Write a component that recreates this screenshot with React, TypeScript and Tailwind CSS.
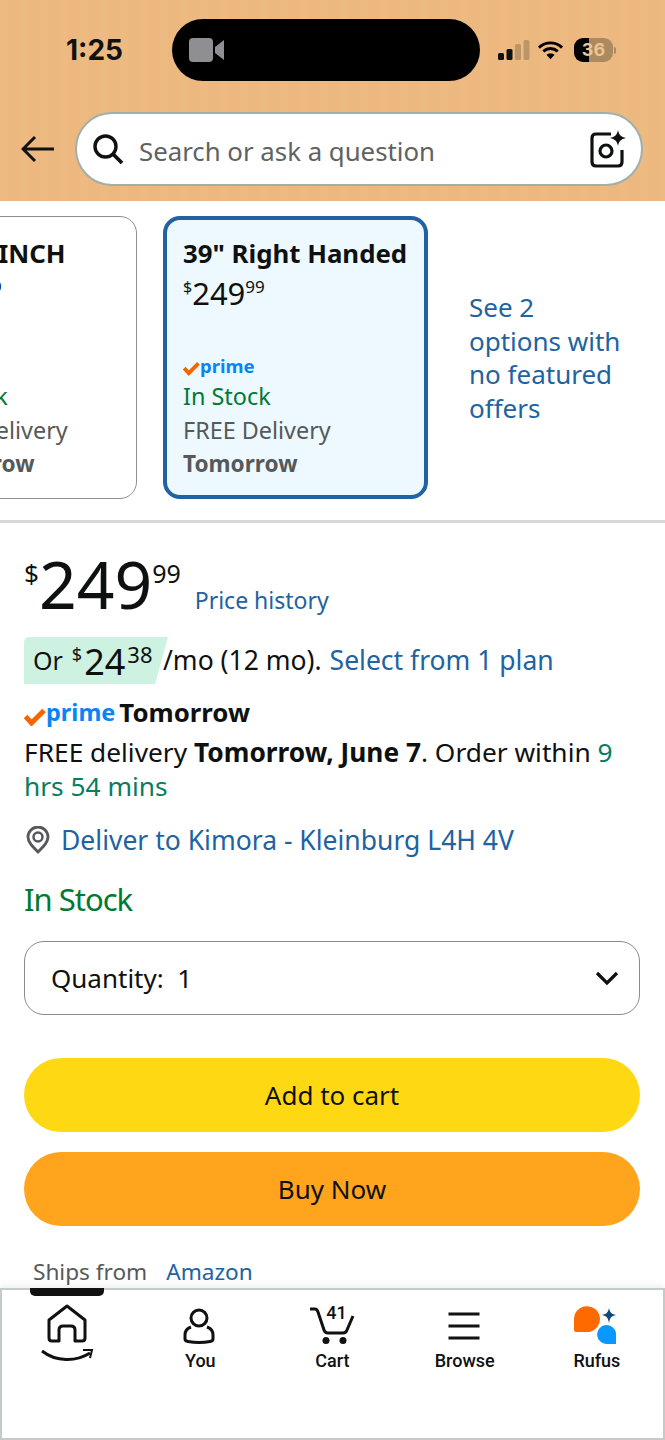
const font = { fontFamily: '"Noto Sans", sans-serif' };

function PrimeBadge({ size }: { size: 'sm' | 'lg' }) {
  const big = size === 'lg';
  return (
    <span className="inline-flex items-end">
      <svg viewBox="0 0 22 18" className={big ? 'mb-[0px] h-[18px] w-[22px]' : 'mb-[1px] h-[15px] w-[17px]'}>
        <path d="M1.5 8.5 L7.5 15 L20 2.5" fill="none" stroke="#f56600" strokeWidth="5" />
      </svg>
      <span className={big ? 'text-[23.500px] leading-[28px] font-bold text-[#0a84f5]' : 'text-[18.500px] leading-[22px] font-bold text-[#0a84f5]'}>
        prime
      </span>
    </span>
  );
}

function Price({ cents, dollars }: { dollars: string; cents: string }) {
  return (
    <div className="flex h-[34px] items-start text-[#0f1111]">
      <span className="mt-[2px] text-[16px] leading-[18px]">$</span>
      <span className="text-[31px] leading-[34px]">{dollars}</span>
      <span className="mt-[2px] text-[17px] leading-[18px]">{cents}</span>
    </div>
  );
}

function VariantCard({ selected, titleClass, title, dollars }: { selected?: boolean; titleClass?: string; title: string; dollars: string }) {
  return (
    <div
      className={
        selected
          ? 'h-[283px] w-[265px] shrink-0 rounded-[17px] border-4 border-[#2162a1] bg-[#edf8ff] pt-[16px] pl-[16px]'
          : 'ml-[-100px] h-[283px] w-[237px] shrink-0 rounded-[17px] border-[1.5px] border-[#8d9090] bg-white pt-[19px] pl-[19px]'
      }
    >
      <div className={`whitespace-nowrap text-[25.800px] leading-[34px] font-bold text-[#0f1111] ${titleClass ?? ''}`}>{title}</div>
      <div className="mt-[6px]">
        <Price dollars={dollars} cents="99" />
      </div>
      <div className="mt-[45px] flex h-[22px] items-end">
        <PrimeBadge size="sm" />
      </div>
      <div className="mt-[2px] text-[23.400px] leading-[34px] text-[#007a33]">In Stock</div>
      <div className="text-[23.400px] leading-[34px] text-[#565959]">FREE Delivery</div>
      <div className="text-[22.600px] leading-[34px] font-bold text-[#565959]">Tomorrow</div>
    </div>
  );
}

function StatusBar() {
  return (
    <div className="relative flex h-[62px] items-center">
      <div className="ml-[66px] w-[106px] text-[28px] font-bold text-[#111]" style={{ fontFamily: 'Inter' }}>
        1:25
      </div>
      <div className="flex h-[62px] w-[308px] items-center rounded-[31px] bg-black pl-[17px]">
        <svg viewBox="0 0 36 24" className="h-[24px] w-[36px]">
          <rect x="0" y="0" width="24" height="24" rx="4" fill="#8e8e93" />
          <path d="M26 9 L35 2 V22 L26 15 Z" fill="#8e8e93" />
        </svg>
      </div>
      <svg viewBox="0 0 32 20" className="ml-[18px] h-[20px] w-[32px]">
        <rect x="0" y="13" width="6" height="7" rx="1.5" fill="#111" />
        <rect x="8.500" y="9" width="6" height="11" rx="1.5" fill="#111" />
        <rect x="17" y="4" width="6" height="16" rx="1.500" fill="#bb9768" />
        <rect x="25.500" y="0" width="6" height="20" rx="1.500" fill="#bb9768" />
      </svg>
      <svg viewBox="0 0 28 20" className="ml-[7px] h-[20px] w-[27px]">
        <path d="M2 7.500 C9 1 19 1 26 7.500" fill="none" stroke="#000" strokeWidth="3" />
        <path d="M6.500 11.500 C11 7.500 17 7.500 21.500 11.500" fill="none" stroke="#000" strokeWidth="3" />
        <path d="M14 19.500 L9.800 15 C12 13 16 13 18.200 15 Z" fill="#000" />
      </svg>
      <div
        className="ml-[10px] flex h-[24px] w-[39px] items-center justify-center rounded-[9px] bg-[linear-gradient(90deg,#000_38%,#ab8a5f_38%)] text-[18px] leading-none font-bold text-[#ecc595]"
        style={{ fontFamily: 'Inter' }}
      >
        36
      </div>
      <div className="ml-[1px] h-[7px] w-[2px] rounded-r-full bg-[#ab8a5f]" />
    </div>
  );
}

function SearchRow() {
  return (
    <div className="mt-[31px] flex h-[74px] items-center">
      <svg viewBox="0 0 34 28" className="ml-[21px] h-[28px] w-[34px]">
        <path d="M33 14 H2 M14 2 L2 14 L14 26" fill="none" stroke="#111" strokeWidth="3" />
      </svg>
      <div className="ml-[20px] flex h-[74px] w-[568px] items-center rounded-[37px] border-2 border-[#9fb0ac] bg-white pr-[15px] pl-[15px]">
        <svg viewBox="0 0 32 32" className="h-[32px] w-[32px]">
          <circle cx="13.500" cy="13.500" r="10.500" fill="none" stroke="#0f1111" strokeWidth="3.400" />
          <path d="M21 21 L30 30" stroke="#0f1111" strokeWidth="3.800" />
        </svg>
        <span className="mt-[5px] ml-[15px] flex-1 text-[25.800px] text-[#5f6262]">Search or ask a question</span>
        <svg viewBox="0 0 36 38" className="h-[38px] w-[36px]">
          <path
            d="M21 4 H6 Q2 4 2 8 V32 Q2 36 6 36 H28 Q32 36 32 32 V20"
            fill="none"
            stroke="#0f1111"
            strokeWidth="3.200"
          />
          <circle cx="16" cy="21" r="6" fill="none" stroke="#0f1111" strokeWidth="3.200" />
          <path d="M28 0 C29 5 31 7 36 8 C31 9 29 11 28 16 C27 11 25 9 20 8 C25 7 27 5 28 0 Z" fill="#0f1111" />
        </svg>
      </div>
    </div>
  );
}

function NavItem({ icon, label }: { icon: React.ReactNode; label?: string }) {
  return (
    <div className="flex flex-col items-center">
      <div className="flex h-[50px] items-end justify-center">{icon}</div>
      {label && (
        <div className="mt-[6px] text-[18px] leading-[22px] font-medium text-[#0f1111]" style={{ fontFamily: 'Roboto' }}>
          {label}
        </div>
      )}
    </div>
  );
}

function BottomNav() {
  return (
    <div className="relative h-[152px] border-2 border-[#c2caca] bg-white shadow-[0_-3px_6px_rgba(0,0,0,0.06)]">
      <div className="absolute top-[-2px] left-[28px] h-[8px] w-[74px] rounded-b-[5px] bg-[#111]" />
      <div className="grid grid-cols-5 pt-[4px]">
        <div className="flex flex-col items-center">
          <svg viewBox="0 0 54 62" className="mt-[10px] ml-[-3px] h-[62px] w-[54px]">
            <path
              d="M27 2 L45 16 V34 Q45 37 42 37 H35 V26 Q35 22 31 22 H23 Q19 22 19 26 V37 H12 Q9 37 9 34 V16 Z"
              fill="none"
              stroke="#111"
              strokeWidth="3"
              strokeLinejoin="round"
            />
            <path d="M2 47 C16 58 36 58 50 49" fill="none" stroke="#111" strokeWidth="3" />
            <path d="M43 46 L52 46 L50 54" fill="none" stroke="#111" strokeWidth="2" />
          </svg>
        </div>
        <NavItem
          label="You"
          icon={
            <svg viewBox="0 0 32 36" className="ml-[-2px] h-[36px] w-[32px]">
              <circle cx="16" cy="10" r="8" fill="none" stroke="#111" strokeWidth="3" />
              <path
                d="M8 19 Q2 21 2 27 V31 Q2 33 5 33.500 Q16 35.500 27 33.500 Q30 33 30 31 V27 Q30 21 24 19"
                fill="none"
                stroke="#111"
                strokeWidth="3"
              />
            </svg>
          }
        />
        <NavItem
          label="Cart"
          icon={
            <div className="relative h-[38px] w-[46px]">
              <svg viewBox="0 0 46 38" className="h-[38px] w-[46px]">
                <path d="M1 3 H6 Q8 3 9 6 L15 24 Q16 27 19 27 H34 Q37 27 38 24 L44 10" fill="none" stroke="#111" strokeWidth="3" />
                <circle cx="17" cy="34.500" r="3.500" fill="#111" />
                <circle cx="34" cy="34.500" r="3.500" fill="#111" />
              </svg>
              <span
                className="absolute top-[-4px] left-[15px] w-[24px] text-center text-[18px] leading-[22px] font-medium text-[#111]"
                style={{ fontFamily: 'Roboto' }}
              >
                41
              </span>
            </div>
          }
        />
        <NavItem
          label="Browse"
          icon={
            <svg viewBox="0 0 32 28" className="mb-[4px] ml-[-2px] h-[28px] w-[32px]">
              <path d="M0.500 2 H31.500 M0.500 14 H31.500 M0.500 26 H31.500" stroke="#111" strokeWidth="3" />
            </svg>
          }
        />
        <NavItem
          label="Rufus"
          icon={
            <svg viewBox="0 0 44 38" className="ml-[-3px] h-[38px] w-[44px]">
              <path d="M1 24 V13 A13 13 0 1 1 16 26 H3 Q1 26 1 24 Z" fill="#ff6a00" />
              <path d="M43 38 H34 A9.500 9.500 0 1 1 43 27 Z" fill="#0a97ff" />
              <path d="M36 2 C37 6 38 8 43 9 C38 10 37 12 36 17 C35 12 34 10 29 9 C34 8 35 6 36 2 Z" fill="#0e4a7c" />
            </svg>
          }
        />
      </div>
    </div>
  );
}

export default function App() {
  return (
    <div className="flex h-[1440px] w-[665px] flex-col overflow-hidden bg-white text-[#0f1111]" style={font}>
      <header className="h-[201px] shrink-0 bg-[#edb97f] bg-[repeating-linear-gradient(90deg,rgba(255,255,255,0.025)_0px,rgba(255,255,255,0.025)_8px,rgba(0,0,0,0.005)_8px,rgba(0,0,0,0.005)_20px)] pt-[19px]">
        <StatusBar />
        <SearchRow />
      </header>

      <section className="flex h-[322px] shrink-0 items-start gap-[26px] overflow-hidden border-b-[3px] border-[#d5d9d9] pt-[15px]">
        <VariantCard title="38 INCH" titleClass="ml-[42px]" dollars="219" />
        <VariantCard selected title={'39" Right Handed'} dollars="249" />
        <div className="mt-[75px] ml-[15px] w-[156px] text-[26px] leading-[33.500px] text-[#2162a1]">
          See 2 options with no featured offers
        </div>
      </section>

      <main className="min-h-0 flex-1 px-[24px]">
        <div className="mt-[24px] flex h-[72px] items-start">
          <span className="mt-[11px] text-[26px] leading-[30px]">$</span>
          <span className="text-[66px] leading-[72px]">249</span>
          <span className="mt-[11px] text-[25px] leading-[30px]">99</span>
          <span className="mt-[38px] ml-[14px] text-[23px] leading-[30px] text-[#2162a1]">Price history</span>
        </div>

        <div className="mt-[18px] flex h-[47px] items-center">
          <div className="flex h-[47px] w-[144px] items-start rounded-tl-[5px] bg-[#cdf2e2] pl-[9px] [clip-path:polygon(0_0,100%_0,91%_100%,0_100%)]">
            <span className="mt-[6px] text-[25px] leading-[34px]">Or</span>
            <span className="mt-[7px] ml-[9px] text-[18px] leading-[20px]">$</span>
            <span className="mt-[5px] ml-[2px] text-[36px] leading-[40px]">24</span>
            <span className="mt-[4px] ml-[2px] text-[22px] leading-[26px]">38</span>
          </div>
          <span className="ml-[-5px] text-[26.500px] whitespace-nowrap">/mo (12 mo).</span>
          <span className="ml-[8px] text-[26.500px] whitespace-nowrap text-[#2162a1]">Select from 1 plan</span>
        </div>

        <div className="mt-[12px] flex h-[30px] items-end">
          <PrimeBadge size="lg" />
          <span className="ml-[4px] text-[25.800px] leading-[28px] font-bold">Tomorrow</span>
        </div>

        <p className="mt-[9px] w-[600px] text-[26.300px] leading-[34px]">
          FREE delivery <b>Tomorrow, June 7</b>. Order within <span className="text-[#067d62]">9 hrs 54 mins</span>
        </p>

        <div className="mt-[20px] flex h-[34px] items-center">
          <svg viewBox="0 0 24 28" className="ml-[2px] h-[28px] w-[24px]">
            <path
              d="M12 26 C6 20 2 16 2 11 A10 10 0 0 1 22 11 C22 16 18 20 12 26 Z"
              fill="none"
              stroke="#565959"
              strokeWidth="2.800"
            />
            <circle cx="12" cy="11" r="4.500" fill="none" stroke="#565959" strokeWidth="2.500" />
          </svg>
          <span className="ml-[11px] text-[26.500px] leading-[34px] text-[#2162a1]">Deliver to Kimora - Kleinburg L4H 4V</span>
        </div>

        <div className="mt-[22px] text-[31px] leading-[40px] tracking-[-1px] text-[#007a33]">In Stock</div>

        <div className="mt-[22px] flex h-[74px] w-[616px] items-center justify-between rounded-[20px] border-[1.5px] border-[#888c8c] pr-[20px] pl-[26px]">
          <span className="text-[26px] whitespace-pre">Quantity:  1</span>
          <svg viewBox="0 0 24 14" className="h-[14px] w-[24px]">
            <path d="M2 2 L12 12 L22 2" fill="none" stroke="#0f1111" strokeWidth="3.200" />
          </svg>
        </div>

        <div className="mt-[43px] flex h-[74px] w-[616px] items-center justify-center rounded-[37px] bg-[#ffd814] text-[26px]">Add to cart</div>
        <div className="mt-[20px] flex h-[74px] w-[616px] items-center justify-center rounded-[37px] bg-[#ffa41c] text-[26px]">Buy Now</div>

        <div className="mt-[31px] ml-[9px] flex text-[22.600px] leading-[30px]">
          <span className="text-[#565959]">Ships from</span>
          <span className="ml-[19px] text-[#2162a1]">Amazon</span>
        </div>
      </main>

      <BottomNav />
    </div>
  );
}
